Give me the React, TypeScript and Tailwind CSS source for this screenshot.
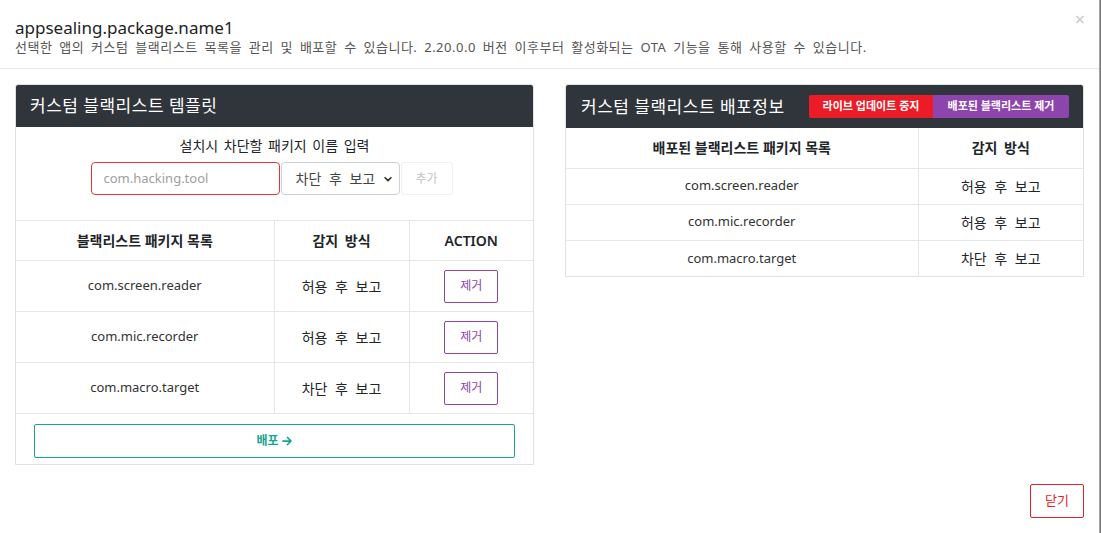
const font = "font-['Noto_Sans','Noto_Sans_CJK_KR',sans-serif]";

const templateRows = [
  { pkg: "com.screen.reader", mode: "허용 후 보고" },
  { pkg: "com.mic.recorder", mode: "허용 후 보고" },
  { pkg: "com.macro.target", mode: "차단 후 보고" },
];

const ArrowRight = (
  <svg width="12" height="12" viewBox="0 0 24 24" fill="none" stroke="currentColor" strokeWidth="3.5" strokeLinecap="round" strokeLinejoin="round">
    <path d="M4 12h15M13 5l7 7-7 7" />
  </svg>
);

export default function App() {
  return (
    <div className={`${font} flex h-[533px] w-[1101px] bg-[#7a7a7a] text-[#212529]`}>
      <div className="flex h-full w-[1099px] flex-col bg-white">
        {/* 모달 헤더 */}
        <div className="relative flex h-[69px] flex-col border-b border-[#e5e7eb] px-[15px] pt-[17px]">
          <h2 className="text-[17px] leading-[22px] text-[#222]">appsealing.package.name1</h2>
          <p className="text-[13px] leading-[16px] tracking-[0.5px] text-[#555] [word-spacing:3px]">
            선택한 앱의 커스텀 블랙리스트 목록을 관리 및 배포할 수 있습니다. 2.20.0.0 버전 이후부터 활성화되는 OTA 기능을 통해 사용할 수 있습니다.
          </p>
          <span className="absolute right-[14px] top-[10px] text-[18px] leading-none text-[#c8c8c8]">×</span>
        </div>

        <div className="flex flex-1 gap-[31px] pl-[15px] pt-[15px]">
          {/* 왼쪽: 템플릿 */}
          <div className="flex h-[381px] w-[519px] flex-none flex-col overflow-hidden rounded-t-[3px] border border-[#dee2e6]">
            <div className="flex h-[42px] items-center bg-[#30353c] px-[14px] text-[17px] tracking-[0.5px] text-white">
              커스텀 블랙리스트 템플릿
            </div>
            <div className="flex flex-col items-center pt-[9px]">
              <p className="text-[14px] leading-[20px] [word-spacing:2px]">설치시 차단할 패키지 이름 입력</p>
              <div className="mr-[6px] mt-[6px] flex h-[33px] items-stretch">
                <input
                  readOnly
                  placeholder="com.hacking.tool"
                  className="w-[189px] rounded-[4px] border border-[#e8333b] px-[12px] text-[13px] outline-none placeholder:text-[#a0a0a0]"
                />
                <div className="ml-[1px] flex w-[119px] items-center justify-between rounded-[4px] border border-[#ccd2dc] pl-[14px] pr-[6px] text-[14px] text-[#444] [word-spacing:4px]">
                  <span>차단 후 보고</span>
                  <svg width="10" height="10" viewBox="0 0 24 24" fill="none" stroke="#333" strokeWidth="4" strokeLinecap="round" strokeLinejoin="round">
                    <path d="M5 9l7 7 7-7" />
                  </svg>
                </div>
                <button className="ml-[1px] w-[52px] rounded-[3px] border border-[#f0f0f0] text-[12px] text-[#c4c4c4]">추가</button>
              </div>
            </div>
            <table className="mt-[25px] w-full border-collapse text-[13px]">
              <thead>
                <tr className="h-[40px] border-y border-[#e3e6ea] text-[14px]">
                  <th className="w-[258px] border-r border-[#e3e6ea] font-semibold">블랙리스트 패키지 목록</th>
                  <th className="w-[135px] border-r border-[#e3e6ea] font-semibold [word-spacing:3px]">감지 방식</th>
                  <th className="font-semibold">ACTION</th>
                </tr>
              </thead>
              <tbody>
                {templateRows.map((r) => (
                  <tr key={r.pkg} className="h-[51px] border-b border-[#e3e6ea]">
                    <td className="border-r border-[#e3e6ea] text-center text-[#333]">{r.pkg}</td>
                    <td className="border-r border-[#e3e6ea] text-center text-[14px] [word-spacing:4px]">{r.mode}</td>
                    <td className="text-center">
                      <button className="h-[33px] w-[54px] rounded-[2px] border border-[#8e44ad] text-[12px] text-[#8e44ad]">제거</button>
                    </td>
                  </tr>
                ))}
              </tbody>
            </table>
            <div className="px-[18px] pt-[10px]">
              <button className="flex h-[34px] w-full items-center justify-center gap-[2px] rounded-[2px] border border-[#1aa394] text-[12px] font-bold text-[#1aa394]">
                배포 {ArrowRight}
              </button>
            </div>
          </div>

          {/* 오른쪽: 배포정보 */}
          <div className="flex flex-col self-start">
            <div className="w-[519px] overflow-hidden rounded-t-[3px] border border-[#dee2e6]">
              <div className="flex h-[43px] items-center bg-[#30353c] pl-[15px] pr-[14px]">
                <span className="text-[17px] tracking-[0.5px] text-white">커스텀 블랙리스트 배포정보</span>
                <div className="ml-auto flex">
                  <span className="flex h-[23px] w-[124px] items-center justify-center rounded-l-[2px] bg-[#ec1c26] text-[11px] font-bold text-white">라이브 업데이트 중지</span>
                  <span className="flex h-[23px] w-[136px] items-center justify-center rounded-r-[2px] bg-[#8e44ad] text-[11px] font-bold text-white">배포된 블랙리스트 제거</span>
                </div>
              </div>
              <table className="w-full border-collapse text-[13px]">
                <thead>
                  <tr className="h-[40px] border-b border-[#e3e6ea] text-[14px]">
                    <th className="w-[352px] border-r border-[#e3e6ea] font-semibold">배포된 블랙리스트 패키지 목록</th>
                    <th className="font-semibold [word-spacing:3px]">감지 방식</th>
                  </tr>
                </thead>
                <tbody>
                  {templateRows.map((r, i) => (
                    <tr key={r.pkg} className={`h-[36px] ${i < templateRows.length - 1 ? "border-b border-[#e3e6ea]" : ""}`}>
                      <td className="border-r border-[#e3e6ea] text-center text-[#333]">{r.pkg}</td>
                      <td className="text-center text-[14px] [word-spacing:4px]">{r.mode}</td>
                    </tr>
                  ))}
                </tbody>
              </table>
            </div>
          </div>
        </div>

        <div className="flex justify-end px-[15px] pb-[15px]">
          <button className="h-[34px] w-[54px] rounded-[2px] border border-[#e8202a] text-[13px] text-[#e8202a]">닫기</button>
        </div>
      </div>
      <div className="w-[1px] bg-[#a0a0a0]" />
    </div>
  );
}
